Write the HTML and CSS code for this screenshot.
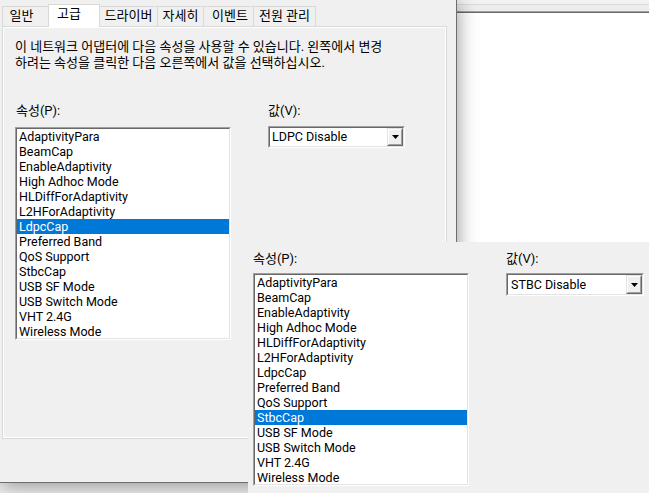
FILE: index.html
```html
<!DOCTYPE html>
<html lang="ko">
<head>
<meta charset="utf-8">
<title>어댑터 속성</title>
<link rel="stylesheet" href="styles.css">
</head>
<body>
<div class="desktop">
  <div class="win win-b">
    <div class="b-top"></div>
    <div class="b-band"></div>
    <div class="b-body"></div>
  </div>

  <div class="win win-a">
    <div class="tabs">
      <div class="tab t1">일반</div>
      <div class="tab t2 sel">고급</div>
      <div class="tab t3">드라이버</div>
      <div class="tab t4">자세히</div>
      <div class="tab t5">이벤트</div>
      <div class="tab t6">전원 관리</div>
    </div>
    <div class="panel">
      <div class="page">
        <p class="desc">이 네트워크 어댑터에 다음 속성을 사용할 수 있습니다. 왼쪽에서 변경<br>하려는 속성을 클릭한 다음 오른쪽에서 값을 선택하십시오.</p>
        <div class="props">
          <div class="col-list">
            <div class="field-label lbl-prop">속성(P):</div>
            <div class="listbox"><ul class="listbox-inner">
              <li>AdaptivityPara</li>
              <li>BeamCap</li>
              <li>EnableAdaptivity</li>
              <li>High Adhoc Mode</li>
              <li>HLDiffForAdaptivity</li>
              <li>L2HForAdaptivity</li>
              <li class="sel">LdpcCap</li>
              <li>Preferred Band</li>
              <li>QoS Support</li>
              <li>StbcCap</li>
              <li>USB SF Mode</li>
              <li>USB Switch Mode</li>
              <li>VHT 2.4G</li>
              <li>Wireless Mode</li>
            </ul></div>
          </div>
          <div class="col-value">
            <div class="field-label">값(V):</div>
            <div class="combo"><div class="combo-inner">
              <span class="combo-text">LDPC Disable</span>
              <span class="combo-btn"><span class="combo-btn-inner"><svg width="7" height="4" viewBox="0 0 7 4"><polygon points="0,0 7,0 3.5,4" fill="#000"/></svg></span></span>
            </div></div>
          </div>
        </div>
      </div>
    </div>
  </div>

  <div class="win win-c">
    <div class="props props-c">
      <div class="col-list">
        <div class="field-label">속성(P):</div>
        <div class="listbox"><ul class="listbox-inner">
          <li>AdaptivityPara</li>
          <li>BeamCap</li>
          <li>EnableAdaptivity</li>
          <li>High Adhoc Mode</li>
          <li>HLDiffForAdaptivity</li>
          <li>L2HForAdaptivity</li>
          <li>LdpcCap</li>
          <li>Preferred Band</li>
          <li>QoS Support</li>
          <li class="sel">StbcCap</li>
          <li>USB SF Mode</li>
          <li>USB Switch Mode</li>
          <li>VHT 2.4G</li>
          <li>Wireless Mode</li>
        </ul></div>
      </div>
      <div class="col-value">
        <div class="field-label">값(V):</div>
        <div class="combo"><div class="combo-inner">
          <span class="combo-text">STBC Disable</span>
          <span class="combo-btn"><span class="combo-btn-inner"><svg width="7" height="4" viewBox="0 0 7 4"><polygon points="0,0 7,0 3.5,4" fill="#000"/></svg></span></span>
        </div></div>
      </div>
    </div>
  </div>
</div>
</body>
</html>
```

FILE: styles.css
```css
html, body {
  margin: 0;
  padding: 0;
}
body {
  width: 649px;
  height: 493px;
  overflow: hidden;
  background: #f0f0f0;
  font-family: Roboto, "Noto Sans CJK KR", sans-serif;
  font-size: 13px;
  color: #000;
}
.desktop {
  position: relative;
  width: 649px;
  height: 493px;
  overflow: hidden;
  background: #ececec;
}
.win {
  position: absolute;
  box-sizing: border-box;
}

/* right white window behind */
.win-b {
  left: 456px;
  top: 0;
  width: 193px;
  height: 260px;
  background: #fff;
}
.b-top {
  height: 4px;
  background: #f2f2f2;
  border-bottom: 1px solid #dadada;
}
.b-band {
  height: 6px;
  background: #ededed;
  border-bottom: 1px solid #a0a0a0;
}
.b-body {
  border-top: 1px solid #696969;
}

/* main property dialog */
.win-a {
  left: 0;
  top: 0;
  width: 456px;
  height: 482px;
  background: #f0f0f0;
  z-index: 1;
  box-shadow: 0 0 0 1px #6e6e6e, 2px 3px 18px rgba(0, 0, 0, 0.4);
}
.tabs {
  display: flex;
  align-items: flex-end;
  height: 26px;
  padding-left: 2px;
  box-sizing: border-box;
}
.tab {
  box-sizing: border-box;
  height: 20px;
  border: 1px solid #d9d9d9;
  border-bottom: 0;
  margin-left: -1px;
  padding-bottom: 1px;
  background: #f0f0f0;
  display: flex;
  align-items: center;
  justify-content: center;
  line-height: 16px;
  white-space: nowrap;
}
.tab.t1 { margin-left: 0; width: 47px; padding-right: 8px; }
.tab.t2 { width: 52px; padding-right: 10px; }
.tab.t3 { width: 59px; }
.tab.t4 { width: 47px; }
.tab.t5 { width: 51px; padding-left: 3px; }
.tab.t6 { width: 63px; }
.tab.sel {
  height: 23px;
  margin-bottom: -1px;
  padding-bottom: 4px;
  background: #fff;
  position: relative;
  z-index: 1;
}
.panel {
  margin-left: 2px;
  width: 445px;
  height: 413px;
  box-sizing: border-box;
  border: 1px solid #d9d9d9;
  padding: 1px;
  background: #fff;
}
.page {
  height: 100%;
  box-sizing: border-box;
  background: #f0f0f0;
  padding: 11px 0 0 11px;
}
.desc {
  margin: 0;
  line-height: 16px;
  white-space: nowrap;
}
.props {
  display: flex;
  margin-top: 32px;
}
.col-list {
  width: 216px;
}
.col-value {
  margin-left: 37px;
}
.field-label {
  height: 16px;
  line-height: 16px;
  margin-bottom: 8px;
  white-space: nowrap;
}
.lbl-prop {
  padding-left: 1px;
}
.col-value .field-label {
  margin-bottom: 7px;
}

/* listbox with sunken edge */
.listbox {
  box-sizing: border-box;
  width: 216px;
  height: 213px;
  border: 1px solid;
  border-color: #a0a0a0 #fff #fff #a0a0a0;
  background: #fff;
}
.listbox-inner {
  box-sizing: border-box;
  height: 100%;
  margin: 0;
  padding: 0;
  list-style: none;
  border: 1px solid;
  border-color: #696969 #e3e3e3 #e3e3e3 #696969;
  overflow: hidden;
  font-size: 12.5px;
}
.listbox-inner li {
  height: 15px;
  line-height: 15px;
  padding-left: 2px;
  white-space: nowrap;
}
.listbox-inner li.sel {
  background: #0078d7;
  color: #fff;
}

/* combo box */
.combo {
  box-sizing: border-box;
  width: 137px;
  height: 22px;
  border: 1px solid;
  border-color: #a0a0a0 #fff #fff #a0a0a0;
  background: #fff;
}
.combo-inner {
  box-sizing: border-box;
  height: 100%;
  border: 1px solid;
  border-color: #696969 #e3e3e3 #e3e3e3 #696969;
  display: flex;
  align-items: stretch;
}
.combo-text {
  flex: 1;
  padding-left: 2px;
  line-height: 18px;
  font-size: 12.5px;
  white-space: nowrap;
}
.combo-btn {
  box-sizing: border-box;
  width: 16px;
  border: 1px solid;
  border-color: #e3e3e3 #696969 #696969 #e3e3e3;
  background: #f0f0f0;
}
.combo-btn-inner {
  box-sizing: border-box;
  height: 100%;
  border: 1px solid;
  border-color: #fff #a0a0a0 #a0a0a0 #fff;
  display: flex;
  align-items: center;
  justify-content: center;
}
.combo-btn-inner svg {
  display: block;
}

/* second dialog on top */
.win-c {
  left: 248px;
  top: 242px;
  width: 401px;
  height: 251px;
  background: #f0f0f0;
  z-index: 2;
  padding: 9px 0 0 5px;
}
.props-c {
  margin-top: 0;
}
.props-c .field-label {
  margin-bottom: 6px;
}
.props-c .combo {
  width: 138px;
  height: 23px;
}
.props-c .combo-text {
  padding-left: 3px;
  line-height: 19px;
}
```
